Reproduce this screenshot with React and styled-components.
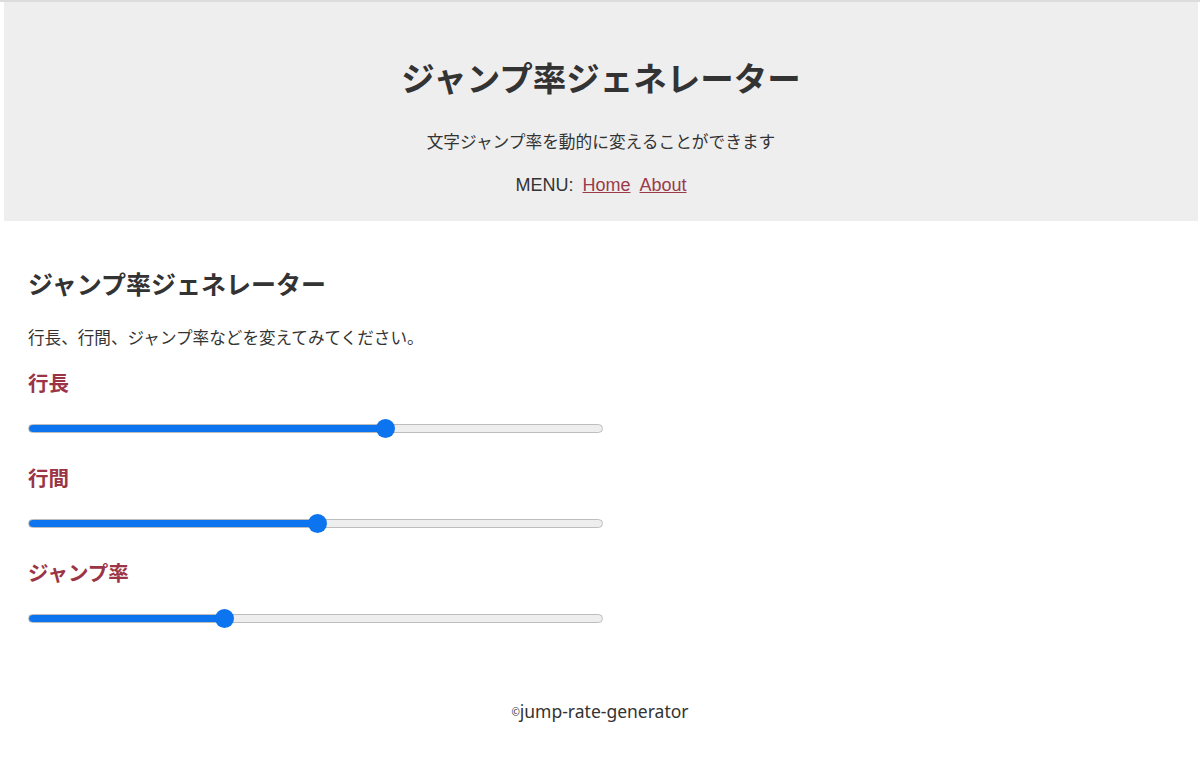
import { useState } from "react";
import styled, { createGlobalStyle } from "styled-components";

const GlobalStyle = createGlobalStyle`
  body {
    margin: 0;
    background: #fff;
    color: #333;
    font-family: "Noto Sans CJK JP", "Noto Sans", sans-serif;
  }
`;

const Page = styled.div`
  border-top: 2px solid #dcdcdc;
  min-height: 755px;
`;

const Header = styled.header`
  margin: 0 2px 0 4px;
  padding: 55px 0 24px;
  background-color: #eeeeee;
  text-align: center;
`;

const Title = styled.h1`
  margin: 0;
  font-size: 33.5px;
  line-height: 40px;
  font-weight: 700;
  color: #333;
`;

const Lead = styled.p`
  margin: 32px 0 0;
  font-size: 16.7px;
  line-height: 24px;
`;

const Menu = styled.nav`
  margin-top: 20px;
  font-size: 18px;
  line-height: 24px;
  font-family: "Liberation Sans", "Noto Sans CJK JP", sans-serif;
  display: flex;
  justify-content: center;
  gap: 9px;
`;

const MenuLink = styled.a`
  color: #9b3a4a;
  text-decoration: underline;
`;

const Main = styled.main`
  padding: 46px 28px 0;
`;

const Heading = styled.h2`
  margin: 0;
  font-size: 25px;
  line-height: 32px;
  font-weight: 700;
`;

const Description = styled.p`
  margin: 26px 0 0;
  font-size: 16.6px;
  line-height: 24px;
`;

const Controls = styled.div`
  margin-top: 20px;
  display: flex;
  flex-direction: column;
  gap: 26px;
`;

const Control = styled.div`
  display: flex;
  flex-direction: column;
  gap: 22px;
`;

const Label = styled.label`
  font-size: 20.5px;
  line-height: 27px;
  font-weight: 700;
  color: #9b3445;
`;

const Range = styled.input`
  -webkit-appearance: none;
  appearance: none;
  display: block;
  width: 575px;
  height: 20px;
  margin: 0;
  background: transparent;

  &::-webkit-slider-runnable-track {
    box-sizing: border-box;
    height: 9px;
    border: 1px solid #bdbdbd;
    border-radius: 5px;
    background: linear-gradient(
      to right,
      #0b74ee 0%,
      #0b74ee var(--fill),
      #eeeeee var(--fill),
      #eeeeee 100%
    );
  }
  &::-webkit-slider-thumb {
    -webkit-appearance: none;
    width: 19px;
    height: 19px;
    margin-top: -6px;
    border-radius: 50%;
    background: #0b74ee;
    border: none;
  }
`;

const Footer = styled.footer`
  margin-top: 71px;
  text-align: center;
  font-family: "Noto Sans", sans-serif;
  font-size: 17.5px;
  line-height: 24px;
`;

const Copy = styled.span`
  font-size: 10px;
  vertical-align: 2px;
`;

const sliders = [
  { id: "length", label: "行長", value: 62.7 },
  { id: "spacing", label: "行間", value: 50.3 },
  { id: "rate", label: "ジャンプ率", value: 33.5 },
];

const App = () => {
  const [values, setValues] = useState(
    Object.fromEntries(sliders.map((s) => [s.id, s.value]))
  );

  return (
    <Page>
      <GlobalStyle />
      <Header>
        <Title>ジャンプ率ジェネレーター</Title>
        <Lead>文字ジャンプ率を動的に変えることができます</Lead>
        <Menu>
          <span>MENU:</span>
          <MenuLink href="#">Home</MenuLink>
          <MenuLink href="#">About</MenuLink>
        </Menu>
      </Header>
      <Main>
        <Heading>ジャンプ率ジェネレーター</Heading>
        <Description>行長、行間、ジャンプ率などを変えてみてください。</Description>
        <Controls>
          {sliders.map((s) => (
            <Control key={s.id}>
              <Label htmlFor={s.id}>{s.label}</Label>
              <Range
                id={s.id}
                type="range"
                min="0"
                max="100"
                step="0.1"
                value={values[s.id]}
                onChange={(e) =>
                  setValues({ ...values, [s.id]: Number(e.target.value) })
                }
                style={{ "--fill": `${values[s.id]}%` }}
              />
            </Control>
          ))}
        </Controls>
      </Main>
      <Footer>
        <Copy>©</Copy>jump-rate-generator
      </Footer>
    </Page>
  );
};

export default App;
